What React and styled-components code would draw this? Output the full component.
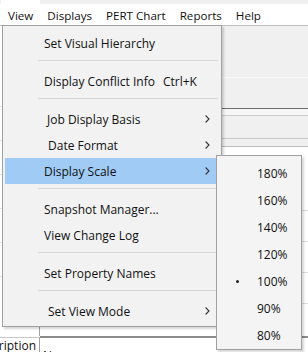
import React from "react";
import styled, { createGlobalStyle } from "styled-components";

const GlobalStyle = createGlobalStyle`
  html, body {
    margin: 0;
    padding: 0;
    background: #fff;
  }
  body {
    font-family: "Segoe UI", "Open Sans", "Noto Sans", sans-serif;
    font-size: 12px;
    color: #111;
  }
  #root {
    width: 308px;
    height: 352px;
    overflow: hidden;
  }
`;

const Screen = styled.div`
  position: relative;
  width: 308px;
  height: 352px;
  overflow: hidden;
  display: flex;
  flex-direction: column;
  background: #fff;
`;

const MenuBar = styled.div`
  display: flex;
  flex: none;
  height: 25px;
  padding-left: 1px;
  box-sizing: border-box;
  font-size: 11.6px;
  background: linear-gradient(#f0f0f0 0 4px, #fff 4px);
`;

const MenuTitle = styled.div`
  display: flex;
  align-items: center;
  padding: 5px 7px 0;
  background: ${(p) => (p.$open ? "#fff" : "transparent")};
  white-space: nowrap;
`;

const Workspace = styled.div`
  flex: 1;
  display: flex;
  flex-direction: column;
  min-height: 0;
  border-top: 1px solid #bcbcbc;
`;

const Upper = styled.div`
  display: grid;
  grid-template-columns: 40px 1fr;
  height: 310px;
  flex: none;
`;

const LeftPane = styled.div`
  border-right: 1px solid #a0a0a0;
  display: flex;
  flex-direction: column;
`;

const LeftRow = styled.div`
  height: ${(p) => p.$h}px;
  border-bottom: 1px solid #e2e2e2;
`;

const RightPane = styled.div`
  display: flex;
  flex-direction: column;
`;

const Band = styled.div`
  height: ${(p) => p.$h}px;
  background: ${(p) => p.$bg || "#f0f0f0"};
  border-bottom: 1px solid ${(p) => p.$line};
`;

const GridArea = styled.div`
  flex: 1;
  background: #fff;
  display: flex;
  flex-direction: column;
`;

const GridRow = styled.div`
  height: ${(p) => p.$h}px;
  border-bottom: 1px solid #dcdcdc;
`;

const HeaderRow = styled.div`
  display: grid;
  grid-template-columns: 40px 1fr;
  height: 40px;
  flex: none;
`;

const HeaderCell = styled.div`
  display: flex;
  justify-content: ${(p) => (p.$clip ? "flex-end" : "flex-start")};
  align-items: flex-start;
  overflow: hidden;
  white-space: nowrap;
  box-sizing: border-box;
  padding: ${(p) => (p.$clip ? "0 3px 0 0" : "10px 0 0 3px")};
  border-top: ${(p) => (p.$clip ? "1px solid #c8c8c8" : "2px solid #8c8c8c")};
  border-right: ${(p) => (p.$clip ? "1px solid #a0a0a0" : "none")};
  line-height: 16px;
  margin-top: ${(p) => (p.$clip ? "1px" : "0")};
`;

const Dropdown = styled.div`
  position: absolute;
  left: 2px;
  top: 25px;
  width: 220px;
  box-sizing: border-box;
  background: #f2f2f2;
  border: 1px solid #a0a0a0;
  box-shadow: 2px 2px 2px rgba(0, 0, 0, 0.16);
  padding: 4px 0 2px;
  display: flex;
  flex-direction: column;
  z-index: 2;
`;

const Item = styled.div`
  display: flex;
  align-items: center;
  height: 26px;
  margin: 0 5px 0 2px;
  padding: 0 6px 0 ${(p) => 39 + (p.$indent || 0)}px;
  background: ${(p) => (p.$active ? "#9fcbf5" : "transparent")};
  white-space: nowrap;
`;

const Label = styled.span`
  flex: 1;
`;

const Shortcut = styled.span`
  margin-left: 8px;
`;

const Separator = styled.div`
  height: 1px;
  background: #d7d7d7;
  margin: 4px 3px 7px 35px;
`;

const SubMenu = styled.div`
  position: absolute;
  left: 216px;
  top: 155px;
  width: 86px;
  box-sizing: border-box;
  background: #f4f4f4;
  border: 1px solid #a0a0a0;
  box-shadow: 2px 2px 2px rgba(0, 0, 0, 0.16);
  padding: 4px 0 0;
  display: flex;
  flex-direction: column;
  z-index: 3;
`;

const ScaleItem = styled.div`
  position: relative;
  display: flex;
  align-items: center;
  height: 27px;
  padding-left: 40px;
`;

const Bullet = styled.span`
  position: absolute;
  left: 19px;
  top: 12px;
  width: 3px;
  height: 3px;
  border-radius: 50%;
  background: #222;
`;

const Chevron = () => (
  <svg width="5" height="8" viewBox="0 0 5 8">
    <path d="M0.6 0.5L4 4L0.6 7.5" fill="none" stroke="#333" strokeWidth="1.1" />
  </svg>
);

const titles = ["View", "Displays", "PERT Chart", "Reports", "Help"];

const viewMenu = [
  { label: "Set Visual Hierarchy" },
  "sep",
  { label: "Display Conflict Info", shortcut: "Ctrl+K" },
  "sep",
  { label: "Job Display Basis", sub: true, indent: 3 },
  { label: "Date Format", sub: true, indent: 4 },
  { label: "Display Scale", sub: true, active: true },
  "sep",
  { label: "Snapshot Manager..." },
  { label: "View Change Log" },
  "sep",
  { label: "Set Property Names" },
  "sep",
  { label: "Set View Mode", sub: true, indent: 4 },
];

const scales = ["180%", "160%", "140%", "120%", "100%", "90%", "80%"];

export default function App() {
  return (
    <Screen>
      <GlobalStyle />
      <MenuBar>
        {titles.map((t, i) => (
          <MenuTitle key={t} $open={i === 0}>
            {t}
          </MenuTitle>
        ))}
      </MenuBar>
      <Workspace>
        <Upper>
          <LeftPane>
            <LeftRow $h={80} />
            <LeftRow $h={33} />
            <LeftRow $h={33} />
            <LeftRow $h={33} />
            <LeftRow $h={33} />
            <LeftRow $h={33} />
          </LeftPane>
          <RightPane>
            <Band $h={51} $line="#fafafa" />
            <Band $h={30} $line="#6e6e6e" />
            <Band $h={6} $bg="#f6f6f6" $line="#cdcdcd" />
            <Band $h={22} $line="#c8c8c8" />
            <Band $h={7} $line="#bdbdbd" />
            <GridArea>
              <GridRow $h={63} />
              <GridRow $h={30} />
              <GridRow $h={30} />
              <GridRow $h={30} />
            </GridArea>
          </RightPane>
        </Upper>
        <HeaderRow>
          <HeaderCell $clip>Description</HeaderCell>
          <HeaderCell>Name</HeaderCell>
        </HeaderRow>
      </Workspace>

      <Dropdown>
        {viewMenu.map((it, i) =>
          it === "sep" ? (
            <Separator key={i} />
          ) : (
            <Item key={i} $active={it.active} $indent={it.indent}>
              <Label>
                {it.label}
                {it.shortcut && <Shortcut>{it.shortcut}</Shortcut>}
              </Label>
              {it.sub && <Chevron />}
            </Item>
          )
        )}
      </Dropdown>

      <SubMenu>
        {scales.map((s) => (
          <ScaleItem key={s}>
            {s === "100%" && <Bullet />}
            {s}
          </ScaleItem>
        ))}
      </SubMenu>
    </Screen>
  );
}
